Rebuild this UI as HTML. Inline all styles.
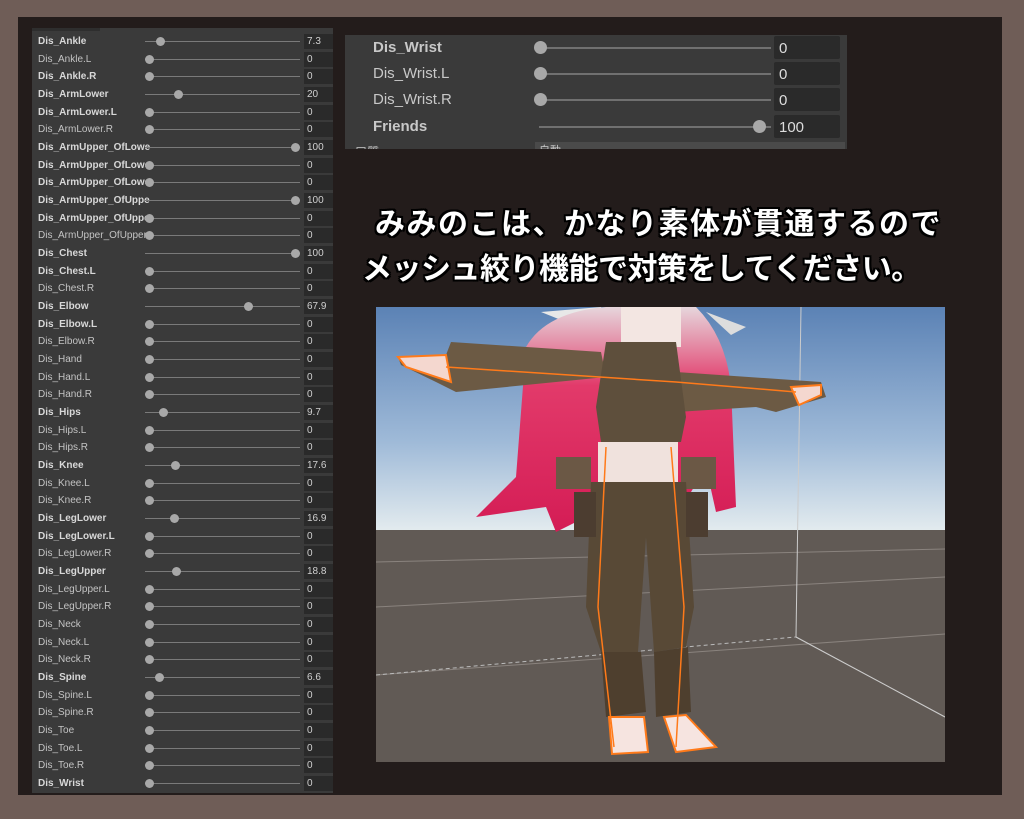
<!DOCTYPE html>
<html><head><meta charset="utf-8"><style>
body{margin:0;width:1024px;height:819px;background:#6f5d57;position:relative;overflow:hidden;font-family:"Liberation Sans","Noto Sans CJK JP",sans-serif}
#in{position:absolute;left:18px;top:17px;width:984px;height:778px;background:#231c1b}
#lp{position:absolute;left:32px;top:28px;width:301px;height:765px;background:#3a3a3a}
.r{position:absolute;left:0;width:301px;height:17px}
.r .l{position:absolute;left:6px;top:3px;font-size:10px;color:#c4c4c4;white-space:nowrap;width:112px;overflow:hidden}
.r .l.b{font-weight:bold;color:#d8d8d8}
.r .t{position:absolute;left:113px;top:8px;width:155px;height:1px;background:#7a7a7a}
.r .h{position:absolute;top:4px;width:9px;height:9px;border-radius:50%;background:#a8a8a8}
.r .v{position:absolute;left:272px;top:1px;width:29px;height:15px;background:#2a2a2a;color:#d0d0d0;font-size:10px;line-height:16px;padding-left:3px;box-sizing:border-box}
#tp{position:absolute;left:345px;top:35px;width:502px;height:114px;background:#3a3a3a;overflow:hidden}
.q{position:absolute;left:0;width:502px;height:26px}
.q .l{position:absolute;left:28px;top:4px;font-size:15px;color:#c8c8c8}
.q .t{position:absolute;left:194px;top:12px;width:232px;height:2px;background:#707070}
.q .h{position:absolute;top:6px;width:13px;height:13px;border-radius:50%;background:#a8a8a8}
.q .v{position:absolute;left:429px;top:1px;width:66px;height:23px;background:#2a2a2a;border-radius:2px;color:#ddd;font-size:15px;line-height:26px;padding-left:5px;box-sizing:border-box}
.cap{position:absolute;color:#fff;font-size:30px;font-weight:bold;text-shadow:-2px -2px 0 #000,2px -2px 0 #000,-2px 2px 0 #000,2px 2px 0 #000,0 2px 0 #000,0 -2px 0 #000,2px 0 0 #000,-2px 0 0 #000;white-space:nowrap}
</style></head><body>
<div id="in"></div>
<div id="lp">
<div style="position:absolute;left:0;top:0;width:68px;height:3px;background:#2e2e2e"></div>
<div id="rows"></div>
</div>
<div id="tp">
<div class="q" style="top:0"><div class="l" style="font-weight:bold">Dis_Wrist</div><div class="t"></div><div class="h" style="left:189px"></div><div class="v">0</div></div>
<div class="q" style="top:26px"><div class="l">Dis_Wrist.L</div><div class="t"></div><div class="h" style="left:189px"></div><div class="v">0</div></div>
<div class="q" style="top:52px"><div class="l">Dis_Wrist.R</div><div class="t"></div><div class="h" style="left:189px"></div><div class="v">0</div></div>
<div class="q" style="top:79px"><div class="l" style="font-weight:bold">Friends</div><div class="t"></div><div class="h" style="left:408px"></div><div class="v">100</div></div>
<div style="position:absolute;left:10px;top:108px;font-size:12px;color:#bbb">口質</div>
<div style="position:absolute;left:190px;top:107px;width:306px;height:10px;background:#4a4a4a;color:#ccc;font-size:11px;padding-left:4px">自動</div>
</div>
<div class="cap" style="top:199px;left:375px;letter-spacing:1.5px">みみのこは、かなり素体が貫通するので</div>
<div class="cap" style="top:244px;left:362px;letter-spacing:-0.5px">メッシュ絞り機能で対策をしてください。</div>
<svg style="position:absolute;left:376px;top:307px" width="569" height="455" viewBox="0 0 569 455">
<defs>
<linearGradient id="sky" x1="0" y1="0" x2="0" y2="1"><stop offset="0" stop-color="#5b82b5"/><stop offset="0.6" stop-color="#9fbad8"/><stop offset="1" stop-color="#e4ecef"/></linearGradient>
<linearGradient id="hair" x1="0" y1="0" x2="0" y2="1"><stop offset="0" stop-color="#e6d6dc"/><stop offset="0.35" stop-color="#e23a6a"/><stop offset="1" stop-color="#d41c55"/></linearGradient>
</defs>
<rect width="569" height="225" fill="url(#sky)"/>
<rect y="223" width="569" height="232" fill="#615a55"/>
<g stroke="#8a837e" stroke-width="1" fill="none"><line x1="0" y1="300" x2="569" y2="270"/><line x1="0" y1="368" x2="569" y2="327"/><line x1="0" y1="255" x2="569" y2="242"/><line x1="420" y1="330" x2="569" y2="410"/></g>
<line x1="425" y1="0" x2="420" y2="330" stroke="#ccc" stroke-width="1"/>
<line x1="420" y1="330" x2="569" y2="410" stroke="#ccc" stroke-width="1"/>
<line x1="0" y1="368" x2="420" y2="330" stroke="#bbb" stroke-dasharray="4 3"/>
<path d="M165 5 L225 0 L240 20 L215 25 Z" fill="#e8e8e8"/>
<path d="M330 5 L370 20 L355 28 Z" fill="#ddd"/>
<path d="M150 40 Q170 5 230 0 L320 0 Q350 30 355 80 L360 200 L340 205 L330 160 L300 210 L200 215 L180 225 L170 200 L100 210 L140 170 Z" fill="url(#hair)"/>
<rect x="245" y="0" width="60" height="40" fill="#f3e6e2"/>
<path d="M22 50 L70 48 L75 35 L225 45 L230 70 L80 85 L60 75 L25 58 Z" fill="#6c5a44"/>
<path d="M22 50 L70 48 L75 75 L30 60 Z" fill="#f4d7cf" stroke="#ff7a1a" stroke-width="2"/>
<path d="M300 65 L445 75 L450 90 L400 105 L380 100 L300 105 Z" fill="#6c5a44"/>
<path d="M415 80 L445 78 L445 88 L423 98 Z" fill="#f4d7cf" stroke="#ff7a1a" stroke-width="2"/>
<path d="M230 35 L300 35 L310 110 L305 135 L225 135 L220 100 Z" fill="#5e4f3c"/>
<rect x="222" y="135" width="80" height="40" fill="#f0e2dd"/>
<rect x="180" y="150" width="35" height="32" fill="#6b5845"/>
<rect x="305" y="150" width="35" height="32" fill="#6b5845"/>
<path d="M215 175 L310 175 L318 300 L310 340 L278 345 L270 230 L262 345 L225 345 L210 300 Z" fill="#584936"/>
<path d="M225 345 L265 345 L270 405 L230 410 Z M278 345 L312 340 L315 405 L280 410 Z" fill="#4e3f2e"/>
<path d="M233 410 L268 410 L272 445 L236 447 Z M288 410 L310 408 L340 440 L300 445 Z" fill="#f6e4e0" stroke="#ff7a1a" stroke-width="2"/>
<rect x="198" y="185" width="22" height="45" fill="#4c3d30"/>
<rect x="310" y="185" width="22" height="45" fill="#4c3d30"/>
<g fill="none" stroke="#ff7a1a" stroke-width="1.5"><path d="M70 60 L300 75 L420 85"/><path d="M230 140 L222 300 L238 440"/><path d="M295 140 L308 300 L300 440"/></g>
</svg>
<script>
var d=[["Dis_Ankle",7.3,1],["Dis_Ankle.L",0],["Dis_Ankle.R",0,1],["Dis_ArmLower",20,1],["Dis_ArmLower.L",0,1],["Dis_ArmLower.R",0],["Dis_ArmUpper_OfLower",100,1],["Dis_ArmUpper_OfLower",0,1],["Dis_ArmUpper_OfLower",0,1],["Dis_ArmUpper_OfUpper",100,1],["Dis_ArmUpper_OfUpper",0,1],["Dis_ArmUpper_OfUpper",0],["Dis_Chest",100,1],["Dis_Chest.L",0,1],["Dis_Chest.R",0],["Dis_Elbow",67.9,1],["Dis_Elbow.L",0,1],["Dis_Elbow.R",0],["Dis_Hand",0],["Dis_Hand.L",0],["Dis_Hand.R",0],["Dis_Hips",9.7,1],["Dis_Hips.L",0],["Dis_Hips.R",0],["Dis_Knee",17.6,1],["Dis_Knee.L",0],["Dis_Knee.R",0],["Dis_LegLower",16.9,1],["Dis_LegLower.L",0,1],["Dis_LegLower.R",0],["Dis_LegUpper",18.8,1],["Dis_LegUpper.L",0],["Dis_LegUpper.R",0],["Dis_Neck",0],["Dis_Neck.L",0],["Dis_Neck.R",0],["Dis_Spine",6.6,1],["Dis_Spine.L",0],["Dis_Spine.R",0],["Dis_Toe",0],["Dis_Toe.L",0],["Dis_Toe.R",0],["Dis_Wrist",0,1]];
var h="";d.forEach(function(r,i){var y=5+i*17.67;var x=113+r[1]*1.46;h+='<div class="r" style="top:'+y+'px"><div class="l'+(r[2]?' b':'')+'">'+r[0]+'</div><div class="t"></div><div class="h" style="left:'+x+'px"></div><div class="v">'+r[1]+'</div></div>';});
document.getElementById("rows").innerHTML=h;
</script>
</body></html>
